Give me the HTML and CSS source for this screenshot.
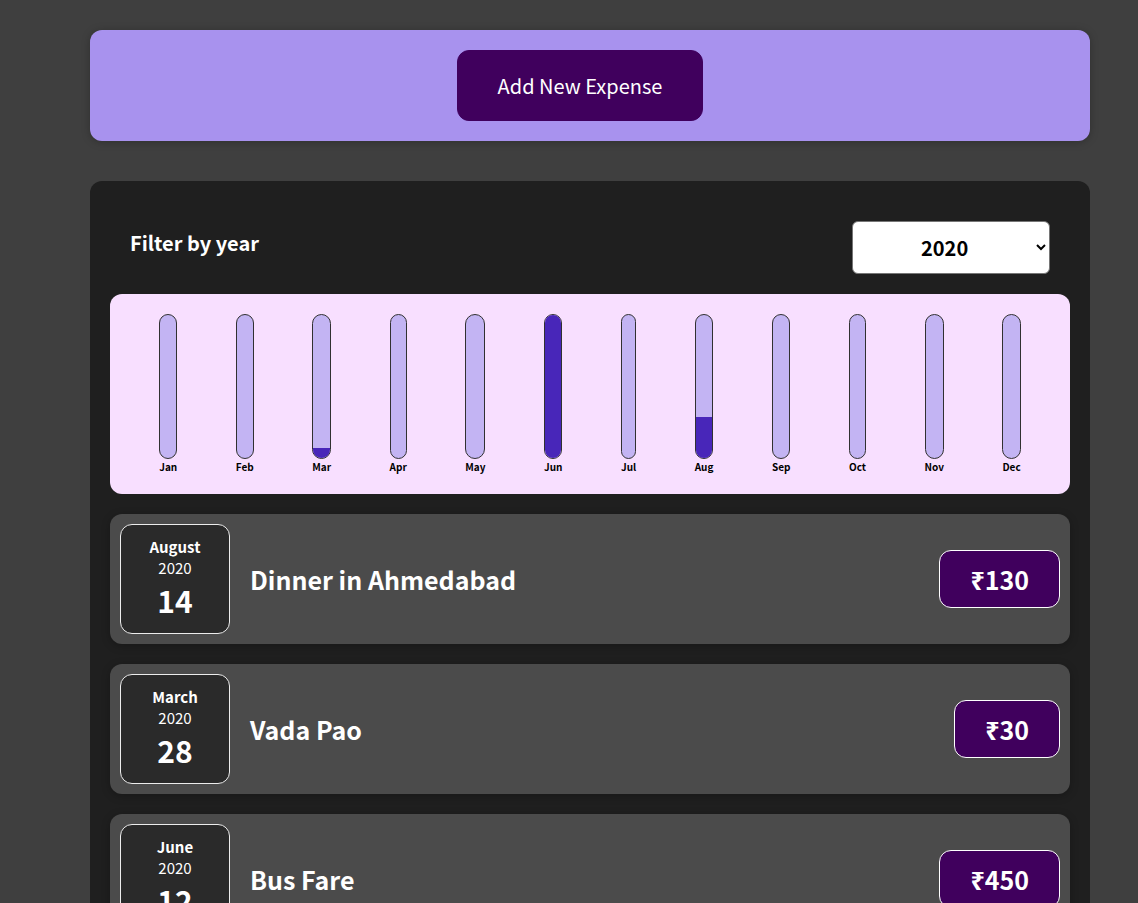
FILE: index.html
```html
<!DOCTYPE html>
<html lang="en">
<head>
<meta charset="utf-8">
<title>Expenses</title>
<link rel="stylesheet" href="styles.css">
</head>
<body>
<div class="app">
  <div class="new-expense">
    <button class="new-expense__btn" type="button">Add New Expense</button>
  </div>

  <div class="expenses">
    <div class="expenses-filter">
      <div class="expenses-filter__control">
        <label for="year">Filter by year</label>
        <select id="year">
          <option>2022</option>
          <option>2021</option>
          <option selected>2020</option>
          <option>2019</option>
        </select>
      </div>
    </div>

    <div class="chart">
      <div class="chart-bar"><div class="chart-bar__inner"><div class="chart-bar__fill" style="height:0%"></div></div><div class="chart-bar__label">Jan</div></div>
      <div class="chart-bar"><div class="chart-bar__inner"><div class="chart-bar__fill" style="height:0%"></div></div><div class="chart-bar__label">Feb</div></div>
      <div class="chart-bar"><div class="chart-bar__inner"><div class="chart-bar__fill" style="height:6.67%"></div></div><div class="chart-bar__label">Mar</div></div>
      <div class="chart-bar"><div class="chart-bar__inner"><div class="chart-bar__fill" style="height:0%"></div></div><div class="chart-bar__label">Apr</div></div>
      <div class="chart-bar"><div class="chart-bar__inner"><div class="chart-bar__fill" style="height:0%"></div></div><div class="chart-bar__label">May</div></div>
      <div class="chart-bar"><div class="chart-bar__inner"><div class="chart-bar__fill" style="height:100%"></div></div><div class="chart-bar__label">Jun</div></div>
      <div class="chart-bar"><div class="chart-bar__inner"><div class="chart-bar__fill" style="height:0%"></div></div><div class="chart-bar__label">Jul</div></div>
      <div class="chart-bar"><div class="chart-bar__inner"><div class="chart-bar__fill" style="height:28.9%"></div></div><div class="chart-bar__label">Aug</div></div>
      <div class="chart-bar"><div class="chart-bar__inner"><div class="chart-bar__fill" style="height:0%"></div></div><div class="chart-bar__label">Sep</div></div>
      <div class="chart-bar"><div class="chart-bar__inner"><div class="chart-bar__fill" style="height:0%"></div></div><div class="chart-bar__label">Oct</div></div>
      <div class="chart-bar"><div class="chart-bar__inner"><div class="chart-bar__fill" style="height:0%"></div></div><div class="chart-bar__label">Nov</div></div>
      <div class="chart-bar"><div class="chart-bar__inner"><div class="chart-bar__fill" style="height:0%"></div></div><div class="chart-bar__label">Dec</div></div>
    </div>

    <ul class="expenses-list">
      <li class="expense-item">
        <div class="expense-date">
          <div class="expense-date__month">August</div>
          <div class="expense-date__year">2020</div>
          <div class="expense-date__day">14</div>
        </div>
        <div class="expense-item__description">
          <h2>Dinner in Ahmedabad</h2>
          <div class="expense-item__price">₹130</div>
        </div>
      </li>
      <li class="expense-item">
        <div class="expense-date">
          <div class="expense-date__month">March</div>
          <div class="expense-date__year">2020</div>
          <div class="expense-date__day">28</div>
        </div>
        <div class="expense-item__description">
          <h2>Vada Pao</h2>
          <div class="expense-item__price">₹30</div>
        </div>
      </li>
      <li class="expense-item">
        <div class="expense-date">
          <div class="expense-date__month">June</div>
          <div class="expense-date__year">2020</div>
          <div class="expense-date__day">12</div>
        </div>
        <div class="expense-item__description">
          <h2>Bus Fare</h2>
          <div class="expense-item__price">₹450</div>
        </div>
      </li>
    </ul>
  </div>
</div>
</body>
</html>
```

FILE: styles.css
```css
* {
  box-sizing: border-box;
}

html {
  font-family: "Noto Sans CJK JP", "Noto Sans", sans-serif;
  font-size: 20px;
}

body {
  margin: 0;
  background-color: #3f3f3f;
}

.app {
  padding: 30px 0 0 90px;
}

.new-expense {
  background-color: #a892ee;
  padding: 20px;
  margin: 0 0 40px;
  width: 1000px;
  border-radius: 12px;
  text-align: center;
  box-shadow: 0 1px 8px rgba(0, 0, 0, 0.25);
}

.new-expense__btn {
  font: inherit;
  cursor: pointer;
  padding: 20px 40px;
  border: 1px solid #40005d;
  background-color: #40005d;
  color: white;
  border-radius: 12px;
  margin-right: 20px;
}

.expenses {
  padding: 20px;
  background-color: rgb(31, 31, 31);
  margin: 0;
  width: 1000px;
  border-radius: 12px;
}

.expenses-filter {
  color: white;
  padding: 0 20px;
}

.expenses-filter__control {
  display: flex;
  width: 100%;
  align-items: center;
  justify-content: space-between;
  margin: 20px 0;
}

.expenses-filter__control label {
  font-weight: bold;
  margin-bottom: 10px;
}

.expenses-filter__control select {
  font: inherit;
  padding: 10px 64px 10px 64px;
  font-weight: bold;
  border-radius: 6px;
  background-color: white;
  color: black;
  border: 1px solid #767676;
}

.chart {
  padding: 20px;
  border-radius: 12px;
  background-color: #f8dfff;
  text-align: center;
  display: flex;
  justify-content: space-around;
  height: 200px;
}

.chart-bar {
  height: 100%;
  display: flex;
  flex-direction: column;
  align-items: center;
}

.chart-bar__inner {
  height: 100%;
  width: 100%;
  border: 1px solid #313131;
  border-radius: 12px;
  background-color: #c3b4f3;
  overflow: hidden;
  display: flex;
  flex-direction: column;
  justify-content: flex-end;
}

.chart-bar__fill {
  background-color: #4826b9;
  width: 100%;
}

.chart-bar__label {
  font-weight: bold;
  font-size: 10px;
  text-align: center;
}

.expenses-list {
  list-style: none;
  padding: 0;
  margin: 20px 0 0;
}

.expense-item {
  display: flex;
  justify-content: space-between;
  align-items: center;
  box-shadow: 0 2px 8px rgba(0, 0, 0, 0.25);
  padding: 10px;
  margin: 0 0 20px;
  border-radius: 12px;
  background-color: #4b4b4b;
}

.expense-date {
  display: flex;
  flex-direction: column;
  width: 110px;
  height: 110px;
  flex-shrink: 0;
  border: 1px solid #ececec;
  background-color: #2a2a2a;
  color: white;
  border-radius: 12px;
  align-items: center;
  justify-content: center;
}

.expense-date__month {
  font-size: 15px;
  font-weight: bold;
}

.expense-date__year {
  font-size: 15px;
}

.expense-date__day {
  font-size: 30px;
  font-weight: bold;
}

.expense-item__description {
  display: flex;
  flex-direction: row;
  align-items: center;
  justify-content: flex-start;
  flex: 1;
}

.expense-item__description h2 {
  font-size: 25px;
  flex: 1;
  margin: 0 20px;
  color: white;
}

.expense-item__price {
  font-size: 25px;
  font-weight: bold;
  color: white;
  background-color: #40005d;
  border: 1px solid white;
  padding: 10px 30px;
  border-radius: 12px;
}
```
